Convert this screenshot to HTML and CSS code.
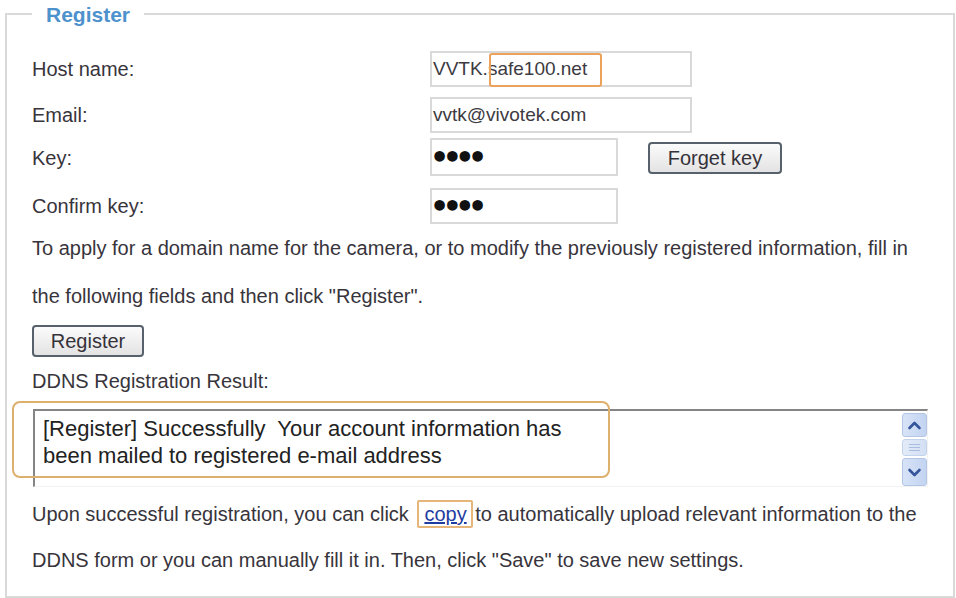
FILE: index.html
```html
<!DOCTYPE html>
<html lang="en">
<head>
<meta charset="utf-8">
<title>Register</title>
<link rel="stylesheet" href="styles.css">
</head>
<body>
<fieldset class="box">
  <legend class="box-title">Register</legend>

  <div class="form-grid">
    <label class="lbl">Host name:</label>
    <div class="field-wrap">
      <div class="field wide">VVTK.safe100.net</div>
      <span class="mark mark-host"></span>
    </div>

    <label class="lbl">Email:</label>
    <div class="field-wrap">
      <div class="field wide">vvtk@vivotek.com</div>
    </div>

    <label class="lbl">Key:</label>
    <div class="field-wrap key-row">
      <div class="field narrow tall"><span class="dots">••••</span></div>
      <button class="btn btn-forget" type="button">Forget key</button>
    </div>

    <label class="lbl">Confirm key:</label>
    <div class="field-wrap">
      <div class="field narrow"><span class="dots">••••</span></div>
    </div>
  </div>

  <p class="para">To apply for a domain name for the camera, or to modify the previously registered information, fill in<br>the following fields and then click "Register".</p>

  <button class="btn btn-register" type="button">Register</button>

  <div class="line">DDNS Registration Result:</div>

  <div class="result-wrap">
    <div class="result">
      <div class="result-text">[Register] Successfully&nbsp; Your account information has<br>been mailed to registered e-mail address</div>
      <div class="scrollbar">
        <div class="sb-btn sb-up">
          <svg width="23" height="22" viewBox="0 0 23 22"><polyline points="6.5,14 11.5,9 16.5,14" fill="none" stroke="#34559a" stroke-width="2.6" stroke-linecap="round" stroke-linejoin="round"/></svg>
        </div>
        <div class="sb-thumb"><i></i><i></i><i></i></div>
        <div class="sb-btn sb-down">
          <svg width="23" height="26" viewBox="0 0 23 26"><polyline points="6.5,11 11.5,16 16.5,11" fill="none" stroke="#34559a" stroke-width="2.6" stroke-linecap="round" stroke-linejoin="round"/></svg>
        </div>
      </div>
    </div>
    <span class="mark mark-result"></span>
  </div>

  <p class="para2">Upon successful registration, you can click <span class="copy-box"><a class="copy" href="#">copy</a></span> to automatically upload relevant information to the<br>DDNS form or you can manually fill it in. Then, click "Save" to save new settings.</p>
</fieldset>
</body>
</html>
```
FILE: styles.css
```css
html, body {
  margin: 0;
  padding: 0;
  background: #ffffff;
}

body {
  font-family: "Liberation Sans", Arial, sans-serif;
  font-size: 20px;
  color: #38343c;
  width: 956px;
  height: 598px;
  overflow: hidden;
}

.box {
  margin: 0 1px 0 5px;
  padding: 23px 20px 13px 25px;
  border: 2px solid #d9d9d9;
  min-width: 0;
}

.box-title {
  padding: 2px 14px 0 14px;
  margin: 0;
  font-size: 21px;
  font-weight: bold;
  line-height: 26px;
  color: #4d91cd;
}

.form-grid {
  display: grid;
  grid-template-columns: 398px 1fr;
  grid-template-rows: 36px 46px 43px 48px;
  align-items: end;
}

.lbl {
  height: 36px;
  line-height: 36px;
  white-space: nowrap;
}

.field-wrap {
  position: relative;
  display: flex;
  align-items: center;
  gap: 30px;
}

.field {
  box-sizing: border-box;
  height: 36px;
  border: 2px solid #d9d9d9;
  padding: 0 1px;
  font-size: 19px;
  line-height: 32px;
  color: #3d3a42;
  white-space: nowrap;
  background: #fff;
}

.field.wide { width: 262px; }
.field.narrow { width: 188px; }
.field.tall { height: 38px; line-height: 34px; }

.key-row { align-items: center; }

.dots {
  font-family: "DejaVu Sans", sans-serif;
  font-size: 30px;
  letter-spacing: -6.5px;
  color: #111;
  font-weight: bold;
  position: relative;
  top: 1px;
  margin-left: -3px;
}

.mark {
  position: absolute;
  box-sizing: border-box;
  pointer-events: none;
}

.mark-host {
  left: 59px;
  top: 2px;
  width: 113px;
  height: 34px;
  border: 2px solid #eba25a;
  border-radius: 3px;
}

.btn {
  box-sizing: border-box;
  height: 32px;
  border: 2px solid #56616c;
  border-radius: 4px;
  background: linear-gradient(#fbfbfb, #e3e3e3);
  font-family: "Liberation Sans", Arial, sans-serif;
  font-size: 20px;
  color: #35323a;
  padding: 0;
  line-height: 28px;
}

.btn-forget {
  width: 134px;
  margin-top: 2px;
}

.btn-register {
  display: block;
  width: 112px;
  margin: 5px 0 0 0;
}

.para {
  margin: 0;
  line-height: 48px;
  white-space: nowrap;
}

.line {
  line-height: 48px;
  white-space: nowrap;
}

.result-wrap {
  position: relative;
  margin: 4px 0 0 1px;
  width: 895px;
}

.result {
  box-sizing: border-box;
  height: 78px;
  display: flex;
  border-top: 2px solid #858585;
  border-left: 2px solid #858585;
  border-right: 1px solid #f2f2f2;
  border-bottom: 1px solid #f2f2f2;
  background: #fff;
}

.result-text {
  flex: 1;
  padding: 4px 0 0 8px;
  font-size: 22px;
  line-height: 27px;
  color: #222;
  white-space: nowrap;
}

.scrollbar {
  width: 25px;
  margin-top: 2px;
  display: flex;
  flex-direction: column;
  gap: 2px;
}

.sb-btn {
  box-sizing: border-box;
  border: 1px solid #b3c6e6;
  border-radius: 3px;
  background: linear-gradient(90deg, #d7e3f7, #c3d4f1);
  display: flex;
  align-items: center;
  justify-content: center;
}

.sb-up { height: 24px; }
.sb-down { height: 28px; }

.sb-thumb {
  box-sizing: border-box;
  height: 17px;
  border: 1px solid #c4d3ec;
  border-radius: 3px;
  background: linear-gradient(90deg, #e3ebf8, #d3dff4);
  display: flex;
  flex-direction: column;
  align-items: center;
  justify-content: center;
  gap: 2px;
}

.sb-thumb i {
  display: block;
  width: 11px;
  height: 1px;
  background: #a9bde0;
}

.mark-result {
  left: -21px;
  top: -8px;
  width: 598px;
  height: 77px;
  border: 2px solid #ddb06d;
  border-radius: 8px;
}

.para2 {
  margin: 4px 0 0 0;
  line-height: 46px;
  white-space: nowrap;
}

.copy-box {
  border: 2px solid #e6b57a;
  border-radius: 2px;
  padding: 1px 4px 1px 5px;
  margin-left: 3px;
  margin-right: -3px;
}

.copy {
  color: #1f3da0;
  text-decoration: underline;
}
```
